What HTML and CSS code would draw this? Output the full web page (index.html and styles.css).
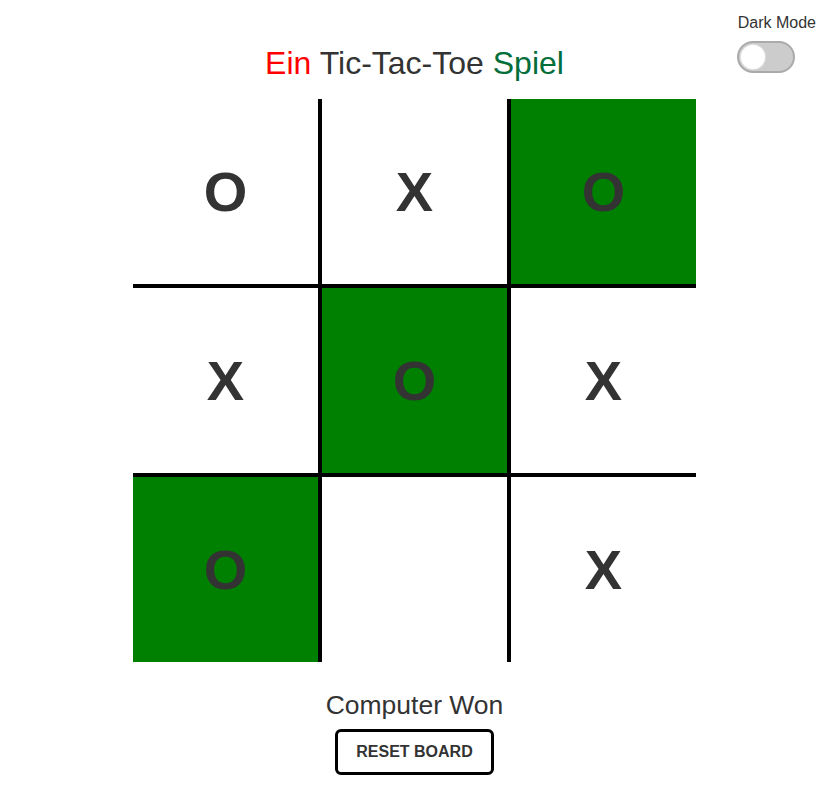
FILE: index.html
```html
<!DOCTYPE html>
<html lang="de">
<head>
<meta charset="utf-8">
<title>Tic-Tac-Toe</title>
<link rel="stylesheet" href="styles.css">
</head>
<body>
<main class="page">
  <header class="header">
    <div class="spacer"></div>
    <h1 class="title"><span class="red">Ein</span> Tic-Tac-Toe <span class="green">Spiel</span></h1>
    <div class="mode">
      <span class="mode-label">Dark Mode</span>
      <label class="switch">
        <input type="checkbox" class="switch-input">
        <span class="slider"></span>
      </label>
    </div>
  </header>
  <section class="board">
    <div class="cell">O</div>
    <div class="cell">X</div>
    <div class="cell win">O</div>
    <div class="cell">X</div>
    <div class="cell win">O</div>
    <div class="cell">X</div>
    <div class="cell win">O</div>
    <div class="cell"></div>
    <div class="cell">X</div>
  </section>
  <p class="status">Computer Won</p>
  <button class="reset">RESET BOARD</button>
</main>
</body>
</html>
```

FILE: styles.css
```css
* { box-sizing: border-box; }
html, body { margin: 0; padding: 0; background: #fff; }
body {
  font-family: "Liberation Sans", Arial, sans-serif;
  color: #333;
}
.page {
  display: flex;
  flex-direction: column;
  align-items: center;
  padding: 12px 0 0 0;
}
.header {
  width: 100%;
  display: grid;
  grid-template-columns: 1fr auto 1fr;
  align-items: start;
}
.title {
  margin: 33px 0 0 0;
  font-size: 32px;
  font-weight: normal;
  line-height: normal;
  color: #333;
  padding-right: 2px;
}
.red { color: #ff0000; }
.green { color: #006e3a; }
.mode {
  justify-self: end;
  display: flex;
  flex-direction: column;
  align-items: flex-start;
  gap: 9px;
  padding: 2px 15px 0 0;
}
.mode-label {
  font-size: 16px;
  line-height: 18px;
  padding-left: 1px;
}
.switch {
  display: block;
  position: relative;
  width: 58px;
  height: 32px;
}
.switch-input { display: none; }
.slider {
  display: block;
  width: 58px;
  height: 32px;
  border-radius: 16px;
  background: #cccccc;
  border: 2px solid #aaaaaa;
  position: relative;
}
.slider::before {
  content: "";
  position: absolute;
  left: 2px;
  top: 2px;
  width: 24px;
  height: 24px;
  border-radius: 50%;
  background: #fff;
  box-shadow: 0 0 0 1px #e0e0e0;
}
.board {
  margin-top: 17px;
  width: 563px;
  height: 563px;
  display: grid;
  grid-template-columns: repeat(3, 1fr);
  grid-template-rows: repeat(3, 1fr);
  gap: 4px;
  background: #000;
  margin-right: 2px;
}
.cell {
  background: #fff;
  display: flex;
  align-items: center;
  justify-content: center;
  font-size: 56px;
  font-weight: bold;
  color: #333;
}
.cell.win { background: #008000; }
.status {
  margin: 28px 0 8px 0;
  font-size: 26.5px;
  line-height: normal;
  padding-right: 2px;
}
.reset {
  font-family: "Liberation Sans", Arial, sans-serif;
  font-size: 16px;
  font-weight: bold;
  color: #333;
  background: #fff;
  border: 3px solid #000;
  border-radius: 6px;
  padding: 11px 18px;
  line-height: normal;
  margin-right: 2px;
}
```
